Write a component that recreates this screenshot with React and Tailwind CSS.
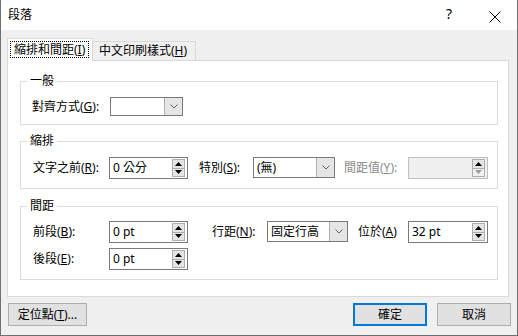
import React from "react";

function Tri({ down, color = "#000" }) {
  return (
    <svg width="7" height="4" viewBox="0 0 7 4">
      <path d={down ? "M0 0 L7 0 L3.5 4 Z" : "M0 4 L3.5 0 L7 4 Z"} fill={color} />
    </svg>
  );
}

function Spin({ value, className, disabled }) {
  return (
    <div
      className={`flex h-[22px] items-center border ${
        disabled ? "border-[#bfbfbf] bg-[#f0f0f0]" : "border-[#7a7a7a] bg-white"
      } ${className}`}
    >
      <span className="flex-1 pl-[3px] leading-[16px]">{value}</span>
      <div className="mr-[2px] flex h-[18px] w-[13px] flex-col border border-[#adadad]">
        <div className="flex flex-1 items-center justify-center bg-[#e5e5e5]">
          <Tri />
        </div>
        <div
          className={`flex flex-1 items-center justify-center border-t border-[#adadad] ${
            disabled ? "bg-[#f0f0f0]" : "bg-[#e5e5e5]"
          }`}
        >
          <Tri down color={disabled ? "#9a9a9a" : "#000"} />
        </div>
      </div>
    </div>
  );
}

function Combo({ value, className }) {
  return (
    <div className={`flex items-stretch border border-[#7a7a7a] bg-white ${className}`}>
      <span className="flex flex-1 items-center pl-[3px] leading-[16px]">{value}</span>
      <div className="flex w-[18px] items-center justify-center border-l border-[#adadad] bg-[#e5e5e5]">
        <svg width="8" height="5" viewBox="0 0 8 5">
          <path d="M0.5 0.5 L4 4 L7.5 0.5" fill="none" stroke="#606060" strokeWidth="1" />
        </svg>
      </div>
    </div>
  );
}

function Group({ title, className, children }) {
  return (
    <div className={`relative w-[478px] border border-[#dcdcdc] ${className}`}>
      <span className="absolute left-[6px] top-[-9px] bg-white px-[3px] leading-[16px]">{title}</span>
      {children}
    </div>
  );
}

function Lbl({ children, className, gray }) {
  return (
    <span className={`shrink-0 leading-[16px] ${gray ? "text-[#8a8a8a]" : ""} ${className}`}>
      {children}
    </span>
  );
}

export default function App() {
  return (
    <div className="flex h-[336px] w-[518px] flex-col overflow-hidden border-x border-b border-[#707070] bg-[#f0f0f0] font-['Noto_Sans','Noto_Sans_CJK_TC',sans-serif] text-[12px] text-black">
      {/* title bar */}
      <div className="flex h-[30px] shrink-0 items-center bg-white">
        <span className="pl-[7px] leading-[16px]">段落</span>
        <span className="ml-auto mt-[-2px] text-[14px] leading-[16px]">?</span>
        <svg className="ml-[37px] mr-[16px] mt-[4px]" width="12" height="12" viewBox="0 0 12 12">
          <path d="M0.5 0.5 L11.5 11.5 M11.5 0.5 L0.5 11.5" stroke="#000" strokeWidth="1" />
        </svg>
      </div>

      {/* tabs */}
      <div className="flex items-end pl-[6px] pt-[8px]">
        <div className="relative z-10 -mb-px flex h-[23px] w-[86px] items-start border border-b-0 border-[#d9d9d9] bg-white pl-[2px] pt-[2px]">
          <span className="border border-dotted border-black px-[3px] leading-[15px]">
            縮排和間距(<u>I</u>)
          </span>
        </div>
        <div className="flex h-[19px] w-[103px] items-center border border-b-0 border-l-0 border-[#d9d9d9] bg-[#f0f0f0] pl-[6px]">
          <span className="leading-[16px]">
            中文印刷樣式(<u>H</u>)
          </span>
        </div>
      </div>

      {/* panel */}
      <div className="ml-[6px] h-[237px] w-[502px] border border-[#d9d9d9] bg-white pl-[12px]">
        <Group title="一般" className="mt-[20px] h-[44px] pt-[15px]">
          <div className="flex items-center pl-[11px]">
            <Lbl className="w-[78px]">
              對齊方式(<u>G</u>):
            </Lbl>
            <Combo value="" className="h-[19px] w-[73px]" />
          </div>
        </Group>

        <Group title="縮排" className="mt-[16px] h-[48px] pt-[15px]">
          <div className="flex items-center pl-[12px]">
            <Lbl className="w-[76px]">
              文字之前(<u>R</u>):
            </Lbl>
            <Spin value="0 公分" className="w-[79px]" />
            <Lbl className="ml-[11px] w-[54px]">
              特別(<u>S</u>):
            </Lbl>
            <Combo value="(無)" className="-mt-px h-[21px] w-[82px]" />
            <Lbl gray className="ml-[9px] w-[64px]">
              間距值(<u>Y</u>):
            </Lbl>
            <Spin value="" disabled className="w-[80px]" />
          </div>
        </Group>

        <Group title="間距" className="mt-[17px] h-[74px] pt-[14px]">
          <div className="flex items-start pl-[12px]">
            <Lbl className="mt-[3px] w-[76px]">
              前段(<u>B</u>):
            </Lbl>
            <Spin value="0 pt" className="w-[79px]" />
            <Lbl className="ml-[24px] mt-[3px] w-[55px]">
              行距(<u>N</u>):
            </Lbl>
            <Combo value="固定行高" className="h-[21px] w-[81px]" />
            <Lbl className="ml-[10px] mt-[3px] w-[50px]">
              位於(<u>A</u>)
            </Lbl>
            <Spin value="32 pt" className="w-[80px]" />
          </div>
          <div className="mt-[5px] flex items-center pl-[12px]">
            <Lbl className="w-[76px]">
              後段(<u>E</u>):
            </Lbl>
            <Spin value="0 pt" className="w-[79px]" />
          </div>
        </Group>
      </div>

      {/* buttons */}
      <div className="mt-[6px] flex items-center pl-[7px] pr-[6px]">
        <button className="flex h-[23px] w-[79px] items-center justify-center border border-[#adadad] bg-[#e1e1e1] leading-[16px]">
          定位點(<u>T</u>)...
        </button>
        <button className="ml-auto flex h-[23px] w-[74px] items-center justify-center border-2 border-[#0078d7] bg-[#e1e1e1] leading-[16px]">
          確定
        </button>
        <button className="ml-[10px] flex h-[23px] w-[74px] items-center justify-center border border-[#adadad] bg-[#e1e1e1] leading-[16px]">
          取消
        </button>
      </div>
    </div>
  );
}
